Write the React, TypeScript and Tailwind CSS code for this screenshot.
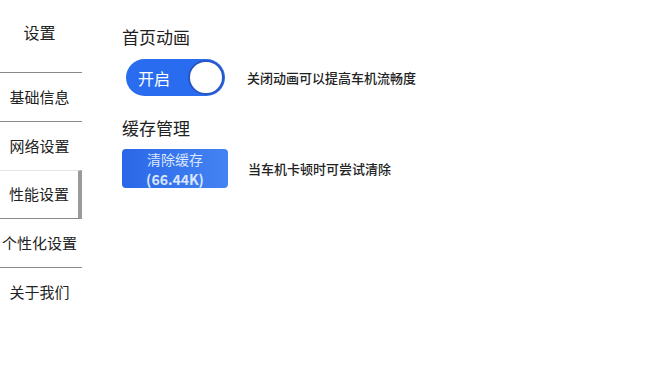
import React, { useState } from 'react';

const menu = ['基础信息', '网络设置', '性能设置', '个性化设置', '关于我们'];

const Sidebar: React.FC<{ active: number; onSelect: (i: number) => void }> = ({ active, onSelect }) => {
  return (
    <div className="w-[82px] shrink-0">
      <div className="h-[73px] border-b border-[#8a8a8a] flex items-start justify-center pt-[20px] pr-[3px] text-[16px] leading-[24px] text-[#222]">
        设置
      </div>
      {menu.map((label, i) => {
        const isActive = i === active;
        const isLast = i === menu.length - 1;
        return (
          <div
            key={label}
            onClick={() => onSelect(i)}
            className={`h-[49px] flex items-center justify-center text-[15px] text-[#222] cursor-pointer whitespace-nowrap ${
              isLast ? '' : 'border-b border-[#8a8a8a]'
            } ${isActive ? 'border-r-[4px] border-r-[#9a9a9a] border-t border-t-[#e4e4e4] -mt-px' : 'pr-[3px]'}`}
          >
            {label}
          </div>
        );
      })}
    </div>
  );
};

export default function App() {
  const [active, setActive] = useState(2);
  const [animOn, setAnimOn] = useState(true);

  return (
    <div
      className="w-[648px] h-[371px] bg-white flex overflow-hidden"
      style={{ fontFamily: '"Noto Sans CJK SC", "Noto Sans", sans-serif' }}
    >
      <Sidebar active={active} onSelect={setActive} />

      <div className="flex-1 pl-[40px] pt-[26px]">
        <div className="text-[17px] leading-[22px] text-[#222]">首页动画</div>
        <div className="mt-[11px] flex items-center">
          <button
            onClick={() => setAnimOn(!animOn)}
            className="ml-[4px] w-[99px] h-[37px] rounded-full bg-[#2a6cf0] flex items-center justify-between pl-[12px] pr-[1px]"
          >
            <span className="text-white text-[16px]">{animOn ? '开启' : '关闭'}</span>
            <span className="w-[36px] h-[35px] rounded-full bg-white border-2 border-[#2a55c4]" />
          </button>
          <span className="ml-[22px] text-[13px] font-medium text-[#222]">关闭动画可以提高车机流畅度</span>
        </div>

        <div className="mt-[21px] text-[17px] leading-[22px] text-[#222]">缓存管理</div>
        <div className="mt-[10px] flex items-center">
          <button className="w-[106px] h-[39px] rounded-[4px] bg-gradient-to-r from-[#2a67e8] to-[#4483f2] flex flex-col items-center justify-center text-[#dbe6ff] text-[14px] leading-[20px]">
            <span className="block shrink-0">清除缓存</span>
            <span className="block shrink-0 font-bold">(66.44K)</span>
          </button>
          <span className="ml-[20px] text-[13px] font-medium text-[#222]">当车机卡顿时可尝试清除</span>
        </div>
      </div>
    </div>
  );
}
